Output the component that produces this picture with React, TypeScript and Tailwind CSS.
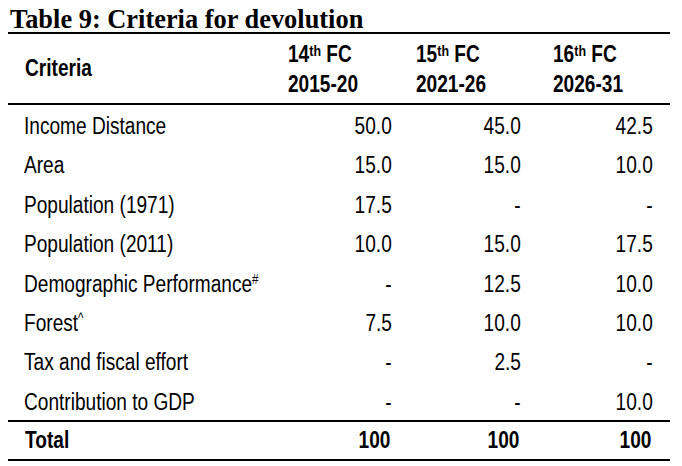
const rows = [
  { label: "Income Distance", sup: "", v: ["50.0", "45.0", "42.5"] },
  { label: "Area", sup: "", v: ["15.0", "15.0", "10.0"] },
  { label: "Population (1971)", sup: "", v: ["17.5", "-", "-"] },
  { label: "Population (2011)", sup: "", v: ["10.0", "15.0", "17.5"] },
  { label: "Demographic Performance", sup: "#", v: ["-", "12.5", "10.0"] },
  { label: "Forest", sup: "^", v: ["7.5", "10.0", "10.0"] },
  { label: "Tax and fiscal effort", sup: "", v: ["-", "2.5", "-"] },
  { label: "Contribution to GDP", sup: "", v: ["-", "-", "10.0"] },
];

const heads = [
  { n: "14", y: "2015-20", pad: "pl-[9px]" },
  { n: "15", y: "2021-26", pad: "pl-[7px]" },
  { n: "16", y: "2026-31", pad: "pl-[15px]" },
];

// no narrow Arial installed, so squeeze Liberation Sans horizontally
const sqL = "inline-block whitespace-nowrap scale-x-[0.83] origin-left";
const sqR = "inline-block whitespace-nowrap scale-x-[0.83] origin-right";
const grid = "grid grid-cols-[271px_130px_129px_132px]";

export default function App() {
  return (
    <div className="w-[682px] h-[466px] bg-white text-black overflow-hidden">
      <h1 className="pl-[10px] pt-[6px] font-['Liberation_Serif','Times_New_Roman',serif] text-[26.4px] leading-[26px] font-bold">
        Table 9: Criteria for devolution
      </h1>
      <div className="ml-[8px] w-[662px] text-[23px] font-['Liberation_Sans',Arial,sans-serif]">
        {/* Header */}
        <div className={`${grid} border-t-2 border-b-2 border-black h-[73px] font-bold`}>
          <div className="flex items-center pl-[17px]">
            <span className={sqL}>Criteria</span>
          </div>
          {heads.map((h) => (
            <div key={h.n} className={`flex flex-col justify-center items-start leading-[30px] ${h.pad}`}>
              <span className={sqL}>
                {h.n}
                <span className="text-[15px] align-[6px] leading-none">th</span> FC
              </span>
              <span className={sqL}>{h.y}</span>
            </div>
          ))}
        </div>

        {/* Body */}
        {rows.map((r) => (
          <div key={r.label} className={`${grid} h-[39.4px] items-center pt-[3px]`}>
            <div className="pl-[16px]">
              <span className={sqL}>
                {r.label}
                {r.sup && <span className="text-[14px] align-[8px] leading-none">{r.sup}</span>}
              </span>
            </div>
            {r.v.map((v, i) => (
              <div key={i} className="text-right pr-[17px]">
                <span className={sqR}>{v}</span>
              </div>
            ))}
          </div>
        ))}

        {/* Total */}
        <div className={`${grid} border-t-2 border-b-2 border-black h-[41px] items-center font-bold`}>
          <div className="pl-[17px]">
            <span className={sqL}>Total</span>
          </div>
          <div className="text-right pr-[19px]">
            <span className={sqR}>100</span>
          </div>
          <div className="text-right pr-[19px]">
            <span className={sqR}>100</span>
          </div>
          <div className="text-right pr-[19px]">
            <span className={sqR}>100</span>
          </div>
        </div>
      </div>
    </div>
  );
}
